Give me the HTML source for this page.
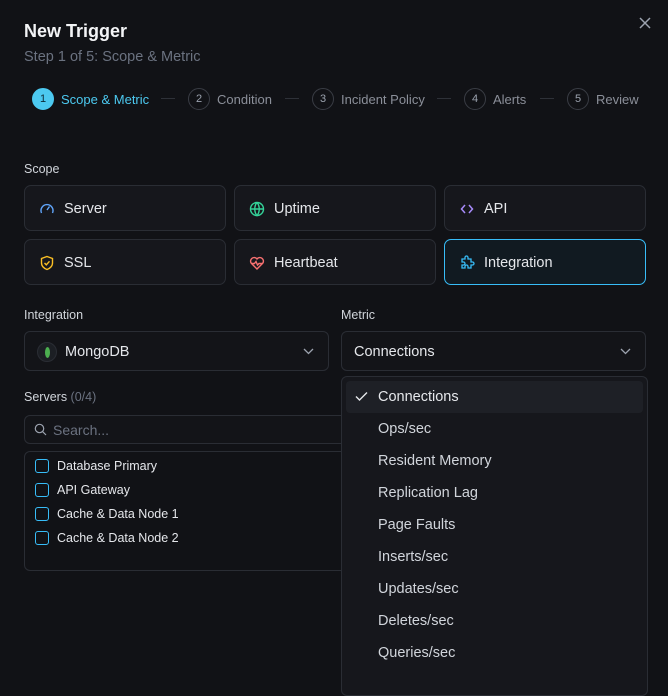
<!DOCTYPE html>
<html><head><style>
*{box-sizing:border-box;margin:0;padding:0}
body{width:668px;height:665px;background:#111216;font-family:"Liberation Sans",sans-serif;color:#e5e7eb;position:relative;overflow:hidden}
.a{position:absolute}
.t{left:24px;top:21px;font-size:18px;font-weight:bold;color:#f3f4f6}
.s{left:24px;top:49px;font-size:14.5px;color:#6b7280}
.step{top:88px;height:22px;display:flex;align-items:center;font-size:13px;color:#8b8f99}
.c{width:22px;height:22px;border-radius:50%;border:1.5px solid #3a3d45;display:flex;align-items:center;justify-content:center;font-size:11px;margin-right:7px;color:#9ca3af}
.ln{top:98px;height:1px;background:#2e3138;width:14px}
.lab{font-size:12.5px;color:#d1d5db}
.card{height:46px;border:1px solid #2a2d34;border-radius:7px;background:#16171c;display:flex;align-items:center;padding-left:14px;padding-top:2px;font-size:14.5px;color:#e5e7eb}
.card svg{margin-right:9px}
.sel{height:40px;border:1px solid #2a2d34;border-radius:6px;background:#131418;display:flex;align-items:center;padding-left:12px;padding-top:2px;font-size:14.5px}
.dd{left:341px;top:376px;width:307px;height:320px;border:1px solid #2a2d34;border-radius:6px;background:#16171c}
.it{position:absolute;left:36px;font-size:14.5px;color:#d1d5db}
.cb{position:absolute;left:35px;width:14px;height:14px;border:1.5px solid #38bdf8;border-radius:3px}
.sv{position:absolute;left:57px;font-size:12.5px;color:#e5e7eb}
</style></head><body>
<div class="a t">New Trigger</div>
<div class="a s">Step 1 of 5: Scope &amp; Metric</div>
<svg class="a" style="left:639px;top:17px" width="12" height="12" viewBox="0 0 12 12"><path d="M1 1L11 11M11 1L1 11" stroke="#9ca3af" stroke-width="1.5"/></svg>
<div class="a step" style="left:32px;color:#4cc9f0"><div class="c" style="background:#4cc9f0;border-color:#4cc9f0;color:#0b2a36">1</div>Scope &amp; Metric</div>
<div class="a ln" style="left:161px"></div>
<div class="a step" style="left:188px"><div class="c">2</div>Condition</div>
<div class="a ln" style="left:285px"></div>
<div class="a step" style="left:312px"><div class="c">3</div>Incident Policy</div>
<div class="a ln" style="left:437px"></div>
<div class="a step" style="left:464px"><div class="c">4</div>Alerts</div>
<div class="a ln" style="left:540px"></div>
<div class="a step" style="left:567px"><div class="c">5</div>Review</div>

<div class="a lab" style="left:24px;top:162px">Scope</div>
<div class="a card" style="left:24px;top:185px;width:202px"><svg width="16" height="16" viewBox="0 0 16 16" fill="none" stroke="#60a5fa" stroke-width="1.4"><path d="M2.5 12A6 6 0 1 1 13.5 12"/><path d="M8 9L10.5 5.5"/></svg>Server</div>
<div class="a card" style="left:234px;top:185px;width:202px"><svg width="16" height="16" viewBox="0 0 16 16" fill="none" stroke="#34d399" stroke-width="1.4"><circle cx="8" cy="8" r="6.5"/><path d="M1.5 8H14.5M8 1.5C5 5 5 11 8 14.5C11 11 11 5 8 1.5"/></svg>Uptime</div>
<div class="a card" style="left:444px;top:185px;width:202px"><svg width="16" height="16" viewBox="0 0 16 16" fill="none" stroke="#a78bfa" stroke-width="1.5"><path d="M6 4L2.5 8L6 12M10 4L13.5 8L10 12"/></svg>API</div>
<div class="a card" style="left:24px;top:239px;width:202px"><svg width="16" height="16" viewBox="0 0 16 16" fill="none" stroke="#fbbf24" stroke-width="1.4"><path d="M8 1.5L13.5 3.5V8C13.5 11 11 13.5 8 14.5C5 13.5 2.5 11 2.5 8V3.5Z"/><path d="M5.5 8L7.3 9.8L10.5 6.3"/></svg>SSL</div>
<div class="a card" style="left:234px;top:239px;width:202px"><svg width="16" height="16" viewBox="0 0 16 16" fill="none" stroke="#f87171" stroke-width="1.4"><path d="M8 14L2.3 8.3A3.3 3.3 0 0 1 8 4A3.3 3.3 0 0 1 13.7 8.3Z"/><path d="M2.5 8.5H5.5L7 6.5L8.5 10L10 8.5H13.5"/></svg>Heartbeat</div>
<div class="a card" style="left:444px;top:239px;width:202px;border-color:#38bdf8;background:#111a21"><svg width="16" height="16" viewBox="0 0 16 16" fill="none" stroke="#38bdf8" stroke-width="1.3"><path d="M6 2.5A1.5 1.5 0 0 1 9 2.5V4H12V7H13.5A1.5 1.5 0 0 1 13.5 10H12V13H9V11.5A1.5 1.5 0 0 0 6 11.5V13H3V10H4.5A1.5 1.5 0 0 0 4.5 7H3V4H6Z"/></svg>Integration</div>

<div class="a lab" style="left:24px;top:308px">Integration</div>
<div class="a lab" style="left:341px;top:308px">Metric</div>
<div class="a sel" style="left:24px;top:331px;width:305px"><div style="width:20px;height:20px;border-radius:50%;background:#1c1f24;border:1px solid #2a2d34;display:flex;align-items:center;justify-content:center;margin-right:8px"><div style="width:5px;height:11px;border-radius:50%;background:#4caf50"></div></div>MongoDB<svg class="a" style="right:14px;top:16px" width="11" height="7" viewBox="0 0 11 7"><path d="M1 1L5.5 5.5L10 1" fill="none" stroke="#9ca3af" stroke-width="1.3"/></svg></div>
<div class="a sel" style="left:341px;top:331px;width:305px">Connections<svg class="a" style="right:14px;top:16px" width="11" height="7" viewBox="0 0 11 7"><path d="M1 1L5.5 5.5L10 1" fill="none" stroke="#9ca3af" stroke-width="1.3"/></svg></div>

<div class="a lab" style="left:24px;top:390px">Servers <span style="color:#6b7280">(0/4)</span></div>
<div class="a" style="left:24px;top:415px;width:330px;height:29px;border:1px solid #2a2d34;border-radius:6px;background:#131418"></div>
<svg class="a" style="left:34px;top:423px" width="13" height="13" viewBox="0 0 13 13" fill="none" stroke="#9ca3af" stroke-width="1.2"><circle cx="5.5" cy="5.5" r="4.2"/><path d="M8.7 8.7L12 12"/></svg>
<div class="a" style="left:53px;top:422px;font-size:14px;color:#6b7280">Search...</div>
<div class="a" style="left:24px;top:451px;width:330px;height:120px;border:1px solid #2a2d34;border-radius:6px;background:#111216"></div>
<div class="cb" style="top:459px"></div><div class="sv" style="top:459px">Database Primary</div>
<div class="cb" style="top:483px"></div><div class="sv" style="top:483px">API Gateway</div>
<div class="cb" style="top:507px"></div><div class="sv" style="top:507px">Cache &amp; Data Node 1</div>
<div class="cb" style="top:531px"></div><div class="sv" style="top:531px">Cache &amp; Data Node 2</div>

<div class="a dd">
<div class="a" style="left:4px;top:4px;width:297px;height:32px;background:#1e2026;border-radius:4px"></div>
<svg class="a" style="left:13px;top:14px" width="13" height="11" viewBox="0 0 13 11"><path d="M1 5.5L4.5 9L12 1.5" fill="none" stroke="#e5e7eb" stroke-width="1.4"/></svg>
<div class="it" style="top:12px;color:#e5e7eb">Connections</div>
<div class="it" style="top:44px">Ops/sec</div>
<div class="it" style="top:76px">Resident Memory</div>
<div class="it" style="top:108px">Replication Lag</div>
<div class="it" style="top:140px">Page Faults</div>
<div class="it" style="top:172px">Inserts/sec</div>
<div class="it" style="top:204px">Updates/sec</div>
<div class="it" style="top:236px">Deletes/sec</div>
<div class="it" style="top:268px">Queries/sec</div>
</div>
</body></html>
